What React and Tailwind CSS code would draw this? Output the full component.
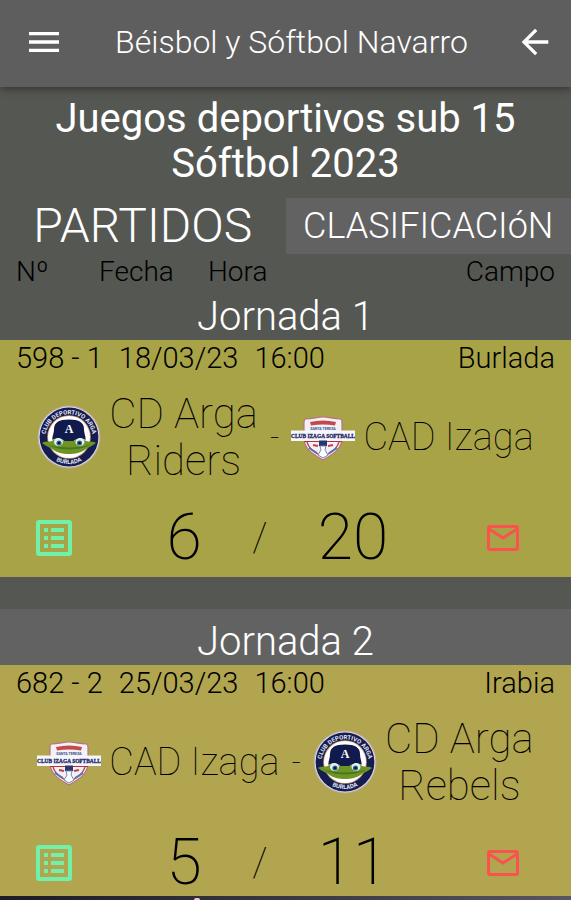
import React from "react";
import { MdArrowBack, MdMenu } from "react-icons/md";

const rounds = [
  {
    name: "Jornada 1",
    code: "598 - 1",
    date: "18/03/23",
    time: "16:00",
    field: "Burlada",
    home: { name: "CD\u00a0Arga Riders", club: "arga", runs: 6 },
    away: { name: "CAD\u00a0Izaga", club: "izaga", runs: 20 },
    headerClass: "pt-1 bg-[#555753]",
    cardClass: "bg-[#a9a347]",
  },
  {
    name: "Jornada 2",
    code: "682 - 2",
    date: "25/03/23",
    time: "16:00",
    field: "Irabia",
    home: { name: "CAD\u00a0Izaga", club: "izaga", runs: 5 },
    away: { name: "CD\u00a0Arga Rebels", club: "arga", runs: 11 },
    headerClass: "mt-8 pt-2.5 bg-[#626262]",
    cardClass: "bg-[#b1a54f]",
  },
];

const SheetIcon = () => (
  <svg viewBox="0 0 36 36" className="size-9" aria-hidden="true">
    <rect
      x="2"
      y="2"
      width="32"
      height="32"
      rx="1"
      fill="none"
      stroke="currentColor"
      strokeWidth="4"
    />
    <path
      d="M8 8h4v4H8zM15 8h13v4H15zM8 16h4v4H8zM15 16h13v4H15zM8 24h4v4H8zM15 24h13v4H15z"
      fill="currentColor"
    />
  </svg>
);

const MailIcon = () => (
  <svg viewBox="0 0 32 26" className="w-8" aria-hidden="true">
    <g fill="none" stroke="currentColor" strokeWidth="3">
      <rect x="1.5" y="1.5" width="29" height="23" rx="1.5" />
      <path d="M2 4l14 9 14-9" />
    </g>
  </svg>
);

const ArgaLogo = ({ id }) => (
  <svg viewBox="0 0 64 64" className="size-16 shrink-0" aria-hidden="true">
    <defs>
      <path id={`${id}-top`} d="M8.5 35a23.6 23.6 0 1 1 47 0" />
      <path id={`${id}-bottom`} d="M12 50.5a27.5 27.5 0 0 0 40 0" />
    </defs>
    <circle cx="32" cy="32" r="31.5" fill="#c3a99a" />
    <circle cx="32" cy="32" r="30.4" fill="#d9dbe6" />
    <circle cx="32" cy="32" r="29.4" fill="#141c50" />
    <circle cx="32" cy="32" r="21.8" fill="#c99a72" />
    <circle cx="32" cy="32" r="21" fill="#fff" />
    <path
      d="M5 38c2-2 7-1 10-2 3-3 9-3 12 0h10c3-3 9-3 12 0 3 1 8 0 10 2-4 3-7 4-10 6-5 4-11 5-17 5s-12-1-17-5c-3-2-6-3-10-6z"
      fill="#6f9426"
    />
    <path
      d="M10 39.5c13 4 31 4 44 0-5 2-10 5-22 5s-17-3-22-5z"
      fill="#4c7518"
    />
    <path
      d="M15.5 35C15 31 17 29 17 24c0-6.5 5-9.5 15-9.5S47 17.5 47 24c0 5 2 7 1.5 11-5-3-9-1-12 1h-9c-3-2-7-4-12-1z"
      fill="#111a4d"
    />
    <ellipse cx="21.5" cy="37" rx="4.5" ry="4" fill="#e6f0f2" />
    <ellipse cx="43" cy="37" rx="4.5" ry="4" fill="#e6f0f2" />
    <circle cx="22" cy="38" r="2.6" fill="#2c6d8c" />
    <circle cx="42.5" cy="38" r="2.6" fill="#2c6d8c" />
    <circle cx="22" cy="38" r="1.3" fill="#0b1438" />
    <circle cx="42.5" cy="38" r="1.3" fill="#0b1438" />
    <text
      x="32"
      y="28"
      textAnchor="middle"
      fontSize="12"
      fontWeight="700"
      fill="#fff"
      fontFamily="Liberation Serif, serif"
    >
      A
    </text>
    <g
      fontSize="6"
      fontWeight="700"
      fill="#e4e7f2"
      textAnchor="middle"
      fontFamily="Roboto, sans-serif"
    >
      <text>
        <textPath href={`#${id}-top`} startOffset="50%">
          CLUB DEPORTIVO ARGA
        </textPath>
      </text>
      <text>
        <textPath href={`#${id}-bottom`} startOffset="50%">
          BURLADA
        </textPath>
      </text>
    </g>
  </svg>
);

const IzagaLogo = () => (
  <svg viewBox="0 0 64 64" className="size-16 shrink-0" aria-hidden="true">
    <path
      d="M15 14c6 0 12-2 17-2s11 2 17 2c2 0 2 2 2 4v15c0 12-11 17-19 22-8-5-19-10-19-22V18c0-2 0-4 2-4z"
      fill="#f3f0f6"
      stroke="#b77382"
      strokeWidth="1.2"
    />
    <path
      d="M15.5 34c1 10 9 14 16.5 18 7.5-4 15.5-8 16.5-18"
      fill="none"
      stroke="#b2404b"
      strokeWidth="1.4"
    />
    <path d="M19 17q13-3 26 0l-1 3.5q-12-2-24 0z" fill="#c14b4a" />
    <text
      x="32"
      y="24.5"
      textAnchor="middle"
      fontSize="3.6"
      fontWeight="700"
      fill="#35508f"
      fontFamily="Roboto, sans-serif"
    >
      SANTA TERESA
    </text>
    <path d="M0 25.5h64V36H0z" fill="#f7f6fa" />
    <path d="M13 36.5h38" stroke="#b8303a" strokeWidth="1.2" />
    <text
      x="32"
      y="32.8"
      textAnchor="middle"
      fontSize="5.4"
      fontWeight="700"
      fill="#1c2866"
      stroke="#1c2866"
      strokeWidth="0.3"
      fontFamily="Liberation Serif, serif"
    >
      CLUB IZAGA SOFTBALL
    </text>
    <path d="M22 40l5 1m10 0 5-1" stroke="#c0424a" strokeWidth="2" />
    <path d="M18 43l8 5m20-5-8 5" stroke="#5175b1" strokeWidth="1.8" />
    <path d="M28 35.5h8V41h-8z" fill="#25376f" />
    <path
      d="M29 41h6l-1 4 3 5-5 3-5-3 3-5z"
      fill="#fff"
      stroke="#7b88ad"
      strokeWidth="1"
    />
  </svg>
);

const Team = ({ team, id }) => (
  <div className="flex items-center gap-2">
    {team.club === "arga" ? <ArgaLogo id={id} /> : <IzagaLogo />}
    <span
      className={`w-min text-center leading-[47px] font-thin ${
        team.club === "arga" ? "text-[42px]" : "text-[38px]"
      }`}
    >
      {team.name}
    </span>
  </div>
);

const Match = ({ round, index }) => (
  <article className={`shrink-0 text-black ${round.cardClass}`}>
    <div className="flex items-center gap-4 px-4 text-[29px] leading-9 font-light">
      <span>{round.code}</span>
      <time>{round.date}</time>
      <time>{round.time}</time>
      <span className="ml-auto">{round.field}</span>
    </div>
    <div className="flex items-center justify-center gap-3 py-3.5">
      <Team team={round.home} id={`home-${index}`} />
      <span className="text-[32px] font-thin">-</span>
      <Team team={round.away} id={`away-${index}`} />
    </div>
    <div className="grid grid-cols-[84fr_128fr_24fr_162fr_101fr] items-center justify-items-center px-9 pt-2 pb-[7px]">
      <button
        aria-label="Ver acta"
        className="cursor-pointer justify-self-start text-[#70f0a9]"
      >
        <SheetIcon />
      </button>
      <span className="text-[64px] leading-none font-extralight">
        {round.home.runs}
      </span>
      <span className="text-[40px] leading-none font-thin">/</span>
      <span className="text-[64px] leading-none font-extralight">
        {round.away.runs}
      </span>
      <button
        aria-label="Enviar mensaje"
        className="mr-4 cursor-pointer justify-self-end text-[#fa534f]"
      >
        <MailIcon />
      </button>
    </div>
  </article>
);

const App = () => {
  return (
    <div className="flex h-screen flex-col bg-[#555753] font-['Roboto',sans-serif] text-white">
      <header className="z-10 flex shrink-0 items-center justify-between bg-[#5e5e5e] pt-[18px] pr-4 pb-[21px] pl-6 shadow-[0_2px_8px_rgba(0,0,0,0.4)]">
        <button aria-label="Menú" className="w-11 cursor-pointer">
          <MdMenu className="size-10" />
        </button>
        <h1 className="text-[32px] leading-[48px] font-light">
          Béisbol y Sóftbol Navarro
        </h1>
        <button aria-label="Volver" className="cursor-pointer">
          <MdArrowBack className="size-10" />
        </button>
      </header>

      <main className="flex min-h-0 flex-1 flex-col overflow-y-auto [scrollbar-width:none]">
        <h2 className="px-10 pt-[9px] pb-3 text-center text-[40px] leading-[45px]">
          Juegos deportivos sub 15 Sóftbol 2023
        </h2>

        <nav className="grid h-14 shrink-0 grid-cols-2 font-light">
          <button className="cursor-pointer text-5xl">PARTIDOS</button>
          <button className="cursor-pointer bg-[#626262] text-4xl">
            CLASIFICACIóN
          </button>
        </nav>

        <div className="flex shrink-0 items-center px-4 text-[28px] leading-9 font-light text-black">
          <span className="w-[83px]">Nº</span>
          <span className="w-[109px]">Fecha</span>
          <span>Hora</span>
          <span className="ml-auto">Campo</span>
        </div>

        {rounds.map((round, index) => (
          <React.Fragment key={round.name}>
            <h3
              className={`shrink-0 text-center text-[40px] leading-[46px] font-light ${round.headerClass}`}
            >
              {round.name}
            </h3>
            <Match round={round} index={index} />
          </React.Fragment>
        ))}
      </main>

      <footer className="flex h-1 shrink-0 items-end bg-linear-to-r from-[#1d1b24] to-[#5a5560] pl-[34%]">
        <span className="h-0.5 w-1.5 rounded-t-full bg-[#f3c9c4]" />
      </footer>
    </div>
  );
};

export default App;
